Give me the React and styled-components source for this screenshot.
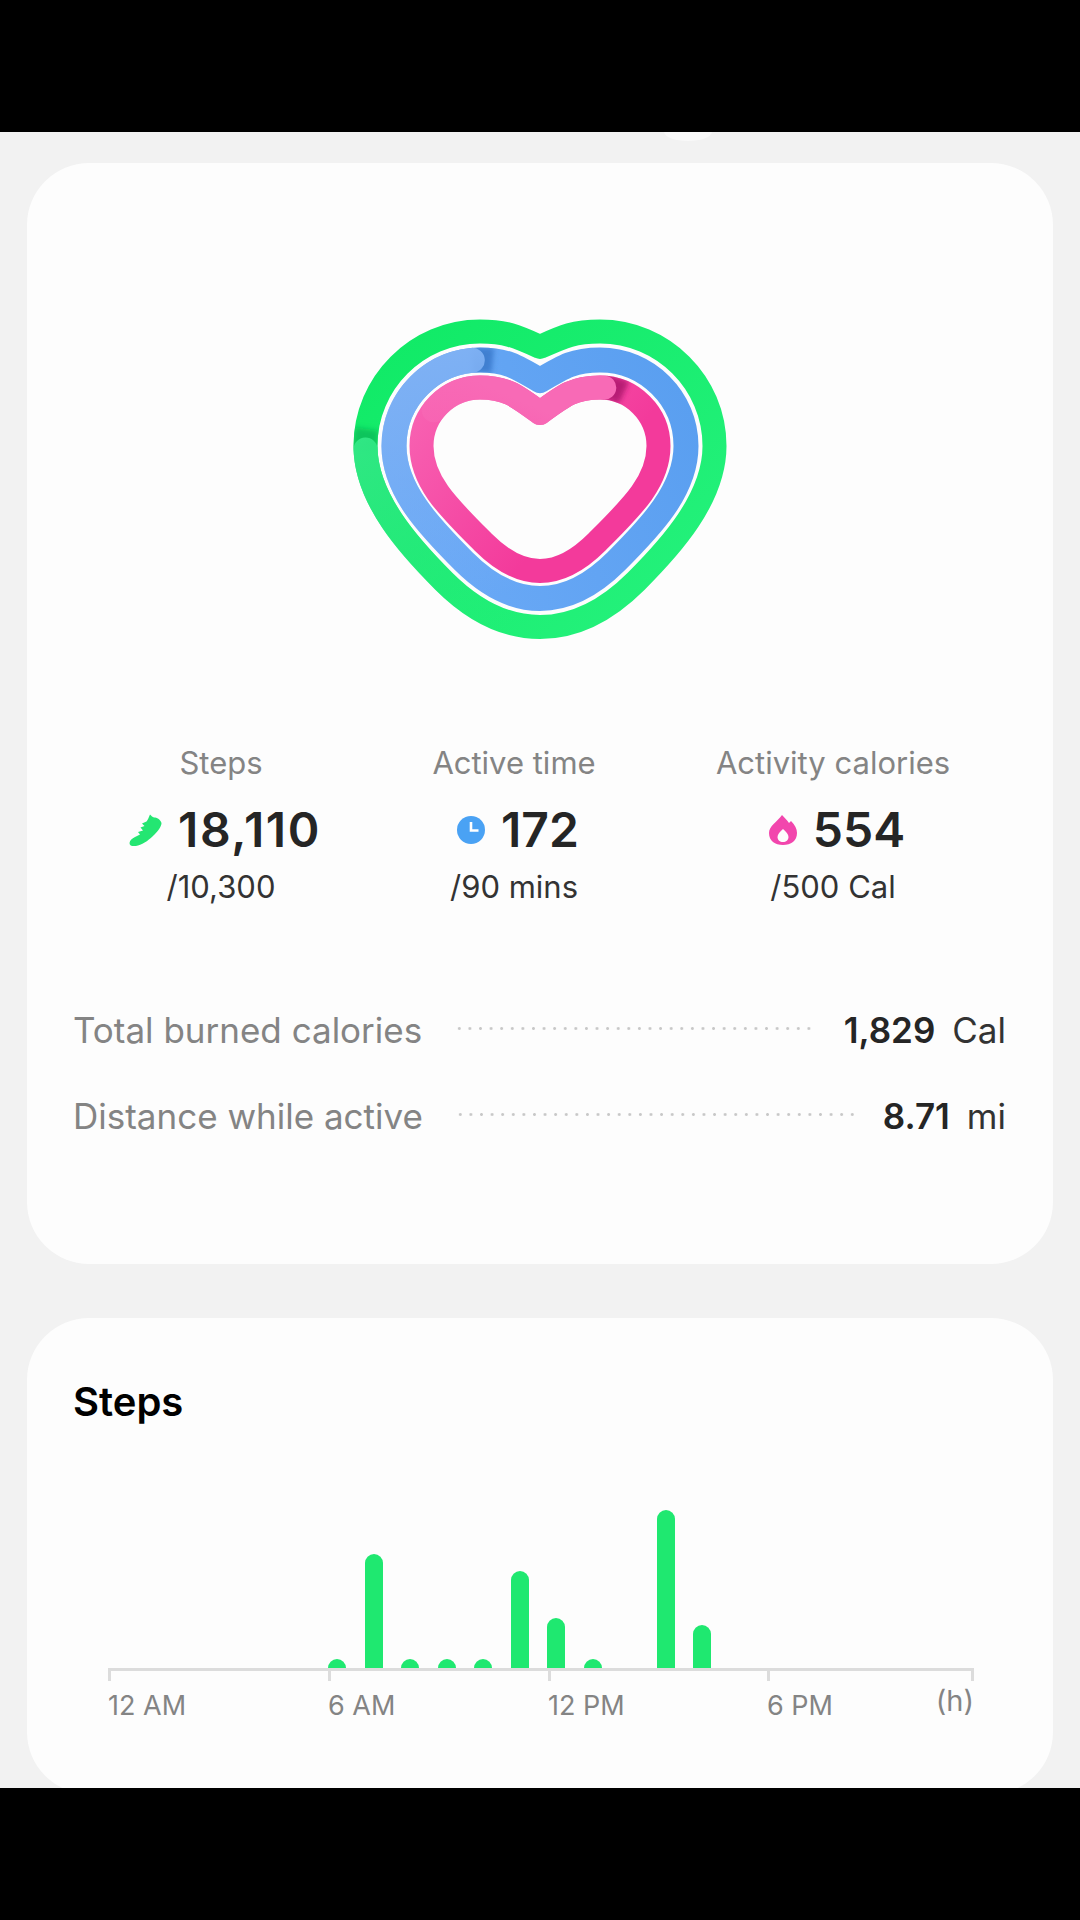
import React from "react"
import styled, { createGlobalStyle } from "styled-components"

const GlobalStyle = createGlobalStyle`
    html, body {
        margin: 0;
        padding: 0;
        background: #000;
    }
    * {
        box-sizing: border-box;
    }
`

const Screen = styled.div`
    width: 1080px;
    height: 1920px;
    display: flex;
    flex-direction: column;
    background: #000;
    font-family: "Inter", "Roboto", sans-serif;
    overflow: hidden;
`
const BlackBar = styled.div`
    height: 132px;
    flex: none;
    background: #000;
`
const Content = styled.main`
    position: relative;
    height: 1656px;
    flex: none;
    padding: 31px 27px 0;
    background: #f2f2f2;
    overflow: hidden;
`
const PullHandle = styled.div`
    position: absolute;
    top: -10px;
    left: 664px;
    width: 48px;
    height: 19px;
    border-radius: 50%;
    background: #f9f9f9;
`
const Card = styled.section`
    background: #fdfdfd;
    border-radius: 62px;
`
const SummaryCard = styled(Card)`
    height: 1101px;
    padding-top: 156px;
    margin-bottom: 54px;
`
const StepsCard = styled(Card)`
    height: 476px;
    padding: 56px 46px 0;
`
const HeartWrap = styled.div`
    display: flex;
    justify-content: center;
    height: 320px;
`
const Stats = styled.div`
    display: grid;
    grid-template-columns: 322px 264px 374px;
    margin: 105px 0 0 33px;
`
const Stat = styled.div`
    display: flex;
    flex-direction: column;
    align-items: center;
`
const StatLabel = styled.div`
    font-size: 31px;
    line-height: 38px;
    color: #848484;
`
const StatValue = styled.div`
    display: flex;
    align-items: center;
    gap: 16px;
    margin-top: 19px;
    padding-left: 8px;
    font-size: 48px;
    line-height: 58px;
    font-weight: 600;
    letter-spacing: ${props => props.$tracking || 0}px;
    color: #252525;
`
const StatGoal = styled.div`
    margin-top: 9px;
    font-size: 31px;
    line-height: 38px;
    color: #333;
`
const Details = styled.div`
    display: flex;
    flex-direction: column;
    gap: 46px;
    margin: 104px 47px 0 46px;
`
const DetailRow = styled.div`
    display: flex;
    align-items: center;
    height: 40px;
    font-size: 35px;
`
const DetailLabel = styled.span`
    color: #848484;
`
const Dots = styled.span`
    flex: 1;
    height: 3px;
    margin: -4px 28px 0 32px;
    background-image: radial-gradient(circle, #c8c8c8 1.3px, transparent 1.5px);
    background-size: 10.6px 3px;
`
const DetailValue = styled.span`
    font-weight: 600;
    color: #252525;
`
const DetailUnit = styled.span`
    margin-left: 17px;
    color: #333;
`
const CardTitle = styled.h2`
    margin: 0;
    font-size: 40px;
    line-height: 56px;
    font-weight: 600;
    color: #000;
`
const Plot = styled.div`
    display: flex;
    align-items: flex-end;
    gap: 18.5px;
    height: 160px;
    margin: 78px 0 0 35px;
    padding-left: 220px;
`
const Bar = styled.div`
    flex: none;
    width: 18px;
    height: ${props => props.$h}px;
    border-radius: 9px 9px 0 0;
    background: #1fe870;
`
const Axis = styled.div`
    display: grid;
    grid-template-columns: 220px 220px 219px 204px 3px;
    width: 866px;
    margin-left: 35px;
    border-top: 3px solid #dcdcdc;
`
const AxisCell = styled.div`
    position: relative;
    height: 50px;
    &::before {
        content: "";
        position: absolute;
        left: 0;
        top: 0;
        width: 3px;
        height: 10px;
        background: #dcdcdc;
    }
`
const AxisLabel = styled.span`
    position: absolute;
    left: 0;
    top: 18px;
    font-size: 27px;
    line-height: 34px;
    white-space: nowrap;
    color: #848484;
`
const UnitLabel = styled(AxisLabel)`
    left: auto;
    right: 0;
    top: 13px;
    font-size: 29px;
`

const GREEN_D = 56
const BLUE_D = 27.5

// centre line of the heart, grown outward by d, clockwise from the notch
function heartPath(d) {
    const cx = 540
    const notch = 412 - 1.18 * d
    const top = 386.5 - d
    const side = 118.5 + d
    const r = (58.5 + d) * 0.55
    const sideY = 445
    const dx = 57 + 0.7 * d
    const dy = 541 + 0.7 * d
    const bottom = 570 + d
    const tail = 20 + d * 0.45
    const lift = notch - (notch - top) * 0.7
    return [
        `M ${cx} ${notch}`,
        `C ${cx + 24} ${lift} ${cx + 34} ${top} ${cx + 60} ${top}`,
        `C ${cx + 60 + r} ${top} ${cx + side} ${sideY - r} ${cx + side} ${sideY}`,
        `C ${cx + side} ${sideY + 36 + d * 0.3} ${cx + dx + 34} ${dy - 34} ${cx + dx} ${dy}`,
        `C ${cx + dx - 19} ${dy + 19} ${cx + tail} ${bottom} ${cx} ${bottom}`,
        `C ${cx - tail} ${bottom} ${cx - dx + 19} ${dy + 19} ${cx - dx} ${dy}`,
        `C ${cx - dx - 34} ${dy - 34} ${cx - side} ${sideY + 36 + d * 0.3} ${cx - side} ${sideY}`,
        `C ${cx - side} ${sideY - r} ${cx - 60 - r} ${top} ${cx - 60} ${top}`,
        `C ${cx - 34} ${top} ${cx - 24} ${lift} ${cx} ${notch}`,
        "Z",
    ].join(" ")
}

// `dash` is the part of the ring that laps over itself, `shadeAt` is where its end sits
const RINGS = [
    {
        id: "green", d: GREEN_D, width: 24, base: "url(#greenBase)", over: "url(#greenOver)",
        shade: "#0cc45c", dash: "26 100", dashOffset: -50, shadeAt: 76, shadeLen: 2,
    },
    {
        id: "blue", d: BLUE_D, width: 25, base: "url(#blueBase)", over: "url(#blueOver)",
        shade: "#3f7fd0", dash: "41.5 100", dashOffset: -50, shadeAt: 91.5, shadeLen: 2.4,
    },
    {
        id: "pink", d: 0, width: 24, base: "url(#pinkBase)", over: "url(#pinkOver)",
        shade: "#b81e74", dash: "10.4 72 17.6", dashOffset: 0, shadeAt: 10.4, shadeLen: 3,
    },
]

function ActivityHeart() {
    return (
        <svg width="400" height="340" viewBox="340 310 400 340" style={{ marginTop: "-8px" }}>
            <defs>
                <linearGradient id="greenBase" gradientUnits="userSpaceOnUse" x1="380" y1="330" x2="640" y2="630">
                    <stop offset="0" stopColor="#10ea66" />
                    <stop offset="1" stopColor="#24f17b" />
                </linearGradient>
                <linearGradient id="greenOver" gradientUnits="userSpaceOnUse" x1="500" y1="630" x2="370" y2="430">
                    <stop offset="0" stopColor="#2ee882" stopOpacity="0" />
                    <stop offset="1" stopColor="#30e784" />
                </linearGradient>
                <linearGradient id="blueBase" gradientUnits="userSpaceOnUse" x1="400" y1="500" x2="680" y2="380">
                    <stop offset="0" stopColor="#6aa9f6" />
                    <stop offset="1" stopColor="#5a9ff0" />
                </linearGradient>
                <linearGradient id="blueOver" gradientUnits="userSpaceOnUse" x1="470" y1="600" x2="420" y2="350">
                    <stop offset="0" stopColor="#7fb1f4" stopOpacity="0" />
                    <stop offset="1" stopColor="#7fb1f4" />
                </linearGradient>
                <linearGradient id="pinkBase" gradientUnits="userSpaceOnUse" x1="420" y1="400" x2="560" y2="520">
                    <stop offset="0" stopColor="#f862b2" />
                    <stop offset="1" stopColor="#f33a9b" />
                </linearGradient>
                <linearGradient id="pinkOver" gradientUnits="userSpaceOnUse" x1="450" y1="500" x2="500" y2="390">
                    <stop offset="0" stopColor="#f86ab6" stopOpacity="0" />
                    <stop offset="1" stopColor="#f86ab6" />
                </linearGradient>
                <filter id="capBlur" x="-40%" y="-40%" width="180%" height="180%">
                    <feGaussianBlur stdDeviation="2.5" />
                </filter>
                {RINGS.map(ring => (
                    <mask key={ring.id} id={`${ring.id}Mask`} maskUnits="userSpaceOnUse" x="340" y="310" width="400" height="340">
                        <path d={heartPath(ring.d)} fill="none" stroke="#fff" strokeWidth={ring.width} strokeLinejoin="round" />
                    </mask>
                ))}
            </defs>
            {RINGS.map(ring => {
                const path = heartPath(ring.d)
                return (
                    <g key={ring.id} fill="none" strokeWidth={ring.width} strokeLinejoin="round">
                        <path d={path} stroke={ring.base} />
                        {/* soft shadow the overlapping end throws on the ring */}
                        <g mask={`url(#${ring.id}Mask)`}>
                            <path
                                d={path}
                                pathLength="100"
                                stroke={ring.shade}
                                strokeDasharray={`${ring.shadeLen} 100`}
                                strokeDashoffset={-ring.shadeAt}
                                filter="url(#capBlur)"
                            />
                        </g>
                        <path
                            d={path}
                            pathLength="100"
                            stroke={ring.over}
                            strokeLinecap="round"
                            strokeDasharray={ring.dash}
                            strokeDashoffset={ring.dashOffset}
                        />
                    </g>
                )
            })}
        </svg>
    )
}

function ShoeIcon() {
    return (
        <svg width="33" height="33" viewBox="0 0 33 33">
            <path
                d="M0.5 29 C1 26 3 24.5 6 23 L11 20.5 L9 18 L14 16.5 L11.5 13.5 L15.5 12 L13 9.5 L17.5 7.5 C19 5.5 20 3 21 0.5 C22.5 2 23.5 3 25 3.5 C28 3.5 31 5 32.5 9 C32.5 12 29.5 16.5 25.5 20.5 C21 25 15 30 9 31.5 C5 32.5 0.5 32.5 0.5 29 Z"
                fill="#24e672"
            />
        </svg>
    )
}

function ClockIcon() {
    return (
        <svg width="28" height="28" viewBox="0 0 28 28">
            <circle cx="14" cy="14" r="14" fill="#4aa2f4" />
            <path d="M14 6 V14.5 H21.5" fill="none" stroke="#fff" strokeWidth="2.6" />
        </svg>
    )
}

function FlameIcon() {
    return (
        <svg width="28" height="32" viewBox="0 0 28 32">
            <path
                fillRule="evenodd"
                d="M13 1 C15 3 18 6 20 9 L22 7 C26 11 28 15 28 19 C28 27 22 31 14 31 C6 31 0 27 0 19 C0 12 8 8 13 1 Z M14 15 C11 18 8.5 20 8.5 23 C8.5 26 11 28 14 28 C17 28 19.5 26 19.5 23 C19.5 20 17 18 14 15 Z"
                fill="#f246ad"
            />
        </svg>
    )
}

const STATS = [
    { label: "Steps", icon: <ShoeIcon />, value: "18,110", goal: "/10,300", tracking: 1.6 },
    { label: "Active time", icon: <ClockIcon />, value: "172", goal: "/90 mins" },
    { label: "Activity calories", icon: <FlameIcon />, value: "554", goal: "/500 Cal" },
]

const DETAILS = [
    { label: "Total burned calories", value: "1,829", unit: "Cal" },
    { label: "Distance while active", value: "8.71", unit: "mi" },
]

// hourly step bars, empty slots keep the spacing
const BARS = [9, 114, 9, 9, 9, 97, 50, 9, 0, 158, 43]

const TICKS = ["12 AM", "6 AM", "12 PM", "6 PM"]

function App() {
    return (
        <Screen>
            <GlobalStyle />
            <BlackBar />
            <Content>
                <PullHandle />
                <SummaryCard>
                    <HeartWrap>
                        <ActivityHeart />
                    </HeartWrap>
                    <Stats>
                        {STATS.map(stat => (
                            <Stat key={stat.label}>
                                <StatLabel>{stat.label}</StatLabel>
                                <StatValue $tracking={stat.tracking}>{stat.icon}{stat.value}</StatValue>
                                <StatGoal>{stat.goal}</StatGoal>
                            </Stat>
                        ))}
                    </Stats>
                    <Details>
                        {DETAILS.map(row => (
                            <DetailRow key={row.label}>
                                <DetailLabel>{row.label}</DetailLabel>
                                <Dots />
                                <DetailValue>{row.value}</DetailValue>
                                <DetailUnit>{row.unit}</DetailUnit>
                            </DetailRow>
                        ))}
                    </Details>
                </SummaryCard>
                <StepsCard>
                    <CardTitle>Steps</CardTitle>
                    <Plot>
                        {BARS.map((h, i) => <Bar key={i} $h={h} />)}
                    </Plot>
                    <Axis>
                        {TICKS.map(tick => (
                            <AxisCell key={tick}><AxisLabel>{tick}</AxisLabel></AxisCell>
                        ))}
                        <AxisCell><UnitLabel>(h)</UnitLabel></AxisCell>
                    </Axis>
                </StepsCard>
            </Content>
            <BlackBar />
        </Screen>
    )
}

export default App
